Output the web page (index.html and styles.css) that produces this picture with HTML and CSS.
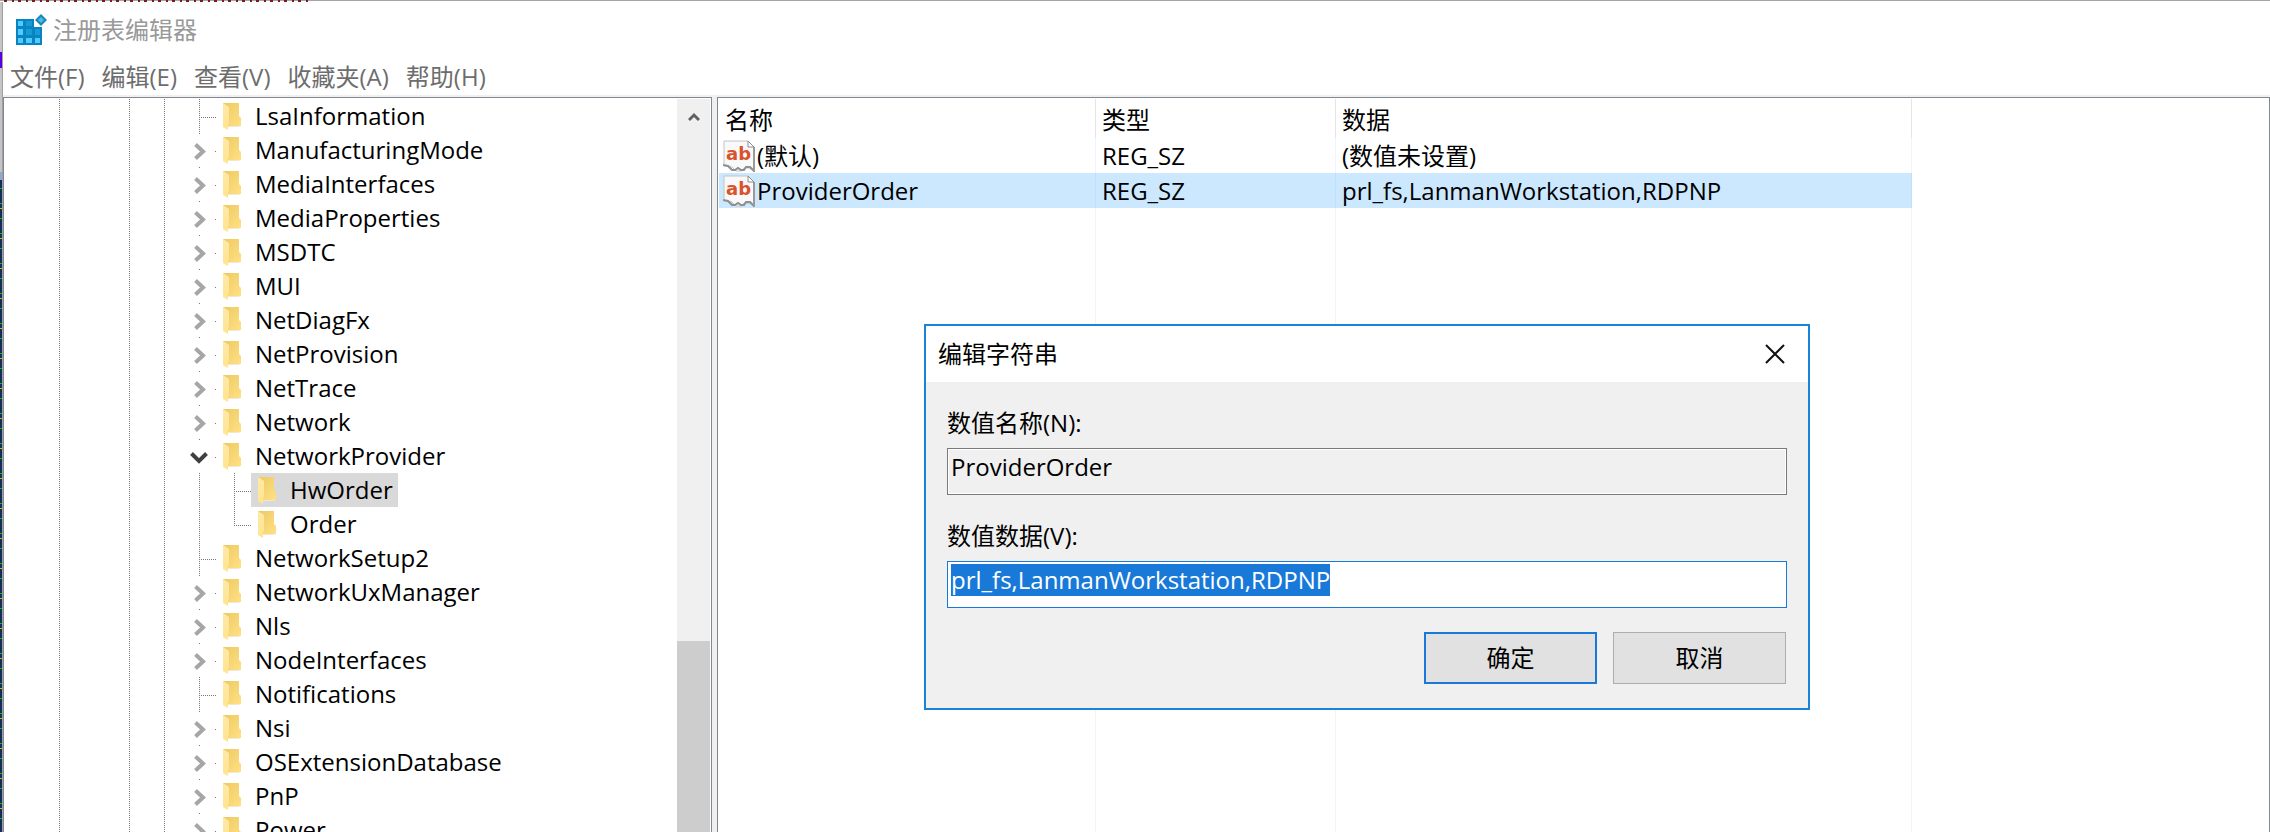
FILE: index.html
```html
<!DOCTYPE html>
<html lang="zh-CN">
<head>
  <meta charset="UTF-8">
  <meta name="viewport" content="width=device-width, initial-scale=1.0">
  <title>注册表编辑器</title>
  <link rel="stylesheet" href="styles.css">
</head>
<body>

<!-- shared icons -->
<svg class="sprite" aria-hidden="true">
  <defs>
    <linearGradient id="folderBack" x1="0" y1="0" x2="1" y2="1">
      <stop offset="0" stop-color="#edc963"/>
      <stop offset="1" stop-color="#ffe083"/>
    </linearGradient>
    <linearGradient id="folderFlap" x1="0" y1="0" x2="0" y2="1">
      <stop offset="0" stop-color="#ffe9a6"/>
      <stop offset="1" stop-color="#ffe48f"/>
    </linearGradient>
  </defs>
  <symbol id="folder" viewBox="0 0 18 28">
    <path d="M5 24h13l-3 1H5z" fill="#eee8d5"/>
    <path d="M0 1h16v13l2 2v8H0z" fill="url(#folderBack)"/>
    <path d="M0 1l6 4v16l-1 1v6l-5-3z" fill="url(#folderFlap)"/>
  </symbol>
  <symbol id="closed" viewBox="0 0 34 34">
    <path d="M13.5 11.5l7.5 7-7.5 7" fill="none" stroke="#a6a6a6" stroke-width="4"/>
    <path d="M17 0h1v1h-1zM33 18h1v1h-1zM35 18h1v1h-1z" fill="#777"/>
  </symbol>
  <symbol id="open" viewBox="0 0 34 34">
    <path d="M9.5 14.5l7.5 7.5 7.5-7.5" fill="none" stroke="#404040" stroke-width="4"/>
    <path d="M17 0h1v1h-1zM33 18h1v1h-1zM35 18h1v1h-1z" fill="#777"/>
  </symbol>
  <symbol id="leaf" viewBox="0 0 34 34">
    <path d="M17.5 0v34M19 18.5h17" fill="none" stroke="#777" stroke-dasharray="1 1"/>
  </symbol>
  <symbol id="last" viewBox="0 0 34 34">
    <path d="M17.5 0v19M19 18.5h17" fill="none" stroke="#777" stroke-dasharray="1 1"/>
  </symbol>
  <symbol id="paper" viewBox="0 0 32 32">
    <path d="M1 1h24l6 6v24l-5-3-5 0-2 3h-6l-4-4-4-1H1z" fill="#f9f9f9" stroke="#c4c4c4"/>
    <path d="M0 25l5 1 4 4h3l3-2 3 2h3l2-3h4l4 4" fill="none" stroke="#8f8f8f" stroke-width="2"/>
    <path d="M31 7v25" stroke="#9a9a9a" stroke-width="2"/>
    <path d="M25 1v6h6z" fill="#fff" stroke="#8c8c8c"/>
  </symbol>
</svg>

<div class="edge-top"></div>

<div class="screen">
  <div class="edge-left"></div>

  <div class="window">
    <header class="titlebar">
      <svg class="app-icon" viewBox="0 0 32 32" aria-hidden="true">
        <path d="M0 5h18v8h8v18H0z" fill="#0a84c1"/>
        <path d="M2 7h5v5H2zM2 15h5v6H2zM2 24h5v5H2zM10 24h6v5h-6zM19 24h5v5h-5z" fill="#4fcbff"/>
        <path d="M10 7h6v5h-6zM10 15h6v6h-6zM19 15h5v6h-5z" fill="#159bd8"/>
        <path d="M25 0l6 6-6 6-6-6z" fill="#1c87b8"/>
        <path d="M25 3l3 3-3 3-3-3z" fill="#48bdea"/>
      </svg>
      <h1>注册表编辑器</h1>
    </header>

    <nav class="menu">
      <button type="button">文件(F)</button>
      <button type="button">编辑(E)</button>
      <button type="button">查看(V)</button>
      <button type="button">收藏夹(A)</button>
      <button type="button">帮助(H)</button>
    </nav>

    <main class="panes">
      <section class="tree-pane">
        <ul class="tree" id="tree"></ul>
        <div class="scrollbar">
          <button type="button" class="scroll-up" aria-label="向上滚动">
            <svg viewBox="0 0 12 10"><path d="M1 8l5-5 5 5" fill="none" stroke="#606060" stroke-width="3"/></svg>
          </button>
          <div class="thumb"></div>
        </div>
      </section>

      <section class="list-pane">
        <table class="values">
          <colgroup>
            <col class="col-name">
            <col class="col-type">
            <col class="col-data">
          </colgroup>
          <thead>
            <tr><th>名称</th><th>类型</th><th>数据</th></tr>
          </thead>
          <tbody>
            <tr>
              <td><div class="name"><svg viewBox="0 0 32 32"><use href="#paper"/><text x="3" y="20" class="ab">ab</text></svg>(默认)</div></td>
              <td>REG_SZ</td>
              <td>(数值未设置)</td>
            </tr>
            <tr class="selected">
              <td><div class="name"><svg viewBox="0 0 32 32"><use href="#paper"/><text x="3" y="20" class="ab">ab</text></svg>ProviderOrder</div></td>
              <td>REG_SZ</td>
              <td>prl_fs,LanmanWorkstation,RDPNP</td>
            </tr>
            <tr class="rest" aria-hidden="true"><td></td><td></td><td></td></tr>
          </tbody>
        </table>
      </section>
    </main>
  </div>
</div>

<form class="dialog" role="dialog" aria-labelledby="dialogTitle">
  <div class="dialog-title">
    <h2 id="dialogTitle">编辑字符串</h2>
    <button type="button" class="close" aria-label="关闭">
      <svg viewBox="0 0 20 20"><path d="M1 1l18 18M19 1L1 19" stroke="#111" stroke-width="2"/></svg>
    </button>
  </div>
  <div class="dialog-body">
    <div class="field">
      <label for="valueName">数值名称(N):</label>
      <input type="text" id="valueName" value="ProviderOrder" readonly>
    </div>
    <div class="field">
      <label for="valueData">数值数据(V):</label>
      <input type="text" id="valueData" value="prl_fs,LanmanWorkstation,RDPNP" spellcheck="false">
    </div>
    <div class="actions">
      <button type="button" class="default">确定</button>
      <button type="button">取消</button>
    </div>
  </div>
</form>

<script>
  const keys = [
    { name: "LsaInformation", mark: "leaf" },
    { name: "ManufacturingMode", mark: "closed" },
    { name: "MediaInterfaces", mark: "closed" },
    { name: "MediaProperties", mark: "closed" },
    { name: "MSDTC", mark: "closed" },
    { name: "MUI", mark: "closed" },
    { name: "NetDiagFx", mark: "closed" },
    { name: "NetProvision", mark: "closed" },
    { name: "NetTrace", mark: "closed" },
    { name: "Network", mark: "closed" },
    { name: "NetworkProvider", mark: "open", children: [
      { name: "HwOrder", mark: "leaf", selected: true },
      { name: "Order", mark: "last" }
    ] },
    { name: "NetworkSetup2", mark: "leaf" },
    { name: "NetworkUxManager", mark: "closed" },
    { name: "Nls", mark: "closed" },
    { name: "NodeInterfaces", mark: "closed" },
    { name: "Notifications", mark: "leaf" },
    { name: "Nsi", mark: "closed" },
    { name: "OSExtensionDatabase", mark: "closed" },
    { name: "PnP", mark: "closed" },
    { name: "Power", mark: "closed" }
  ];

  function render(items) {
    return items.map(k => `
      <li>
        <div class="row">
          <svg class="mark"><use href="#${k.mark}"/></svg>
          <span class="key${k.selected ? ' selected' : ''}"><svg class="folder"><use href="#folder"/></svg>${k.name}</span>
        </div>
        ${k.children ? `<ul>${render(k.children)}</ul>` : ''}
      </li>`).join('');
  }

  document.getElementById('tree').innerHTML = render(keys);

  const data = document.getElementById('valueData');
  data.focus();
  data.select();
</script>

</body>
</html>
```
FILE: styles.css
```css
* {
  box-sizing: border-box;
  margin: 0;
  padding: 0;
}

body {
  display: flex;
  flex-direction: column;
  height: 100vh;
  overflow: hidden;
  background: #fff;
  color: #000;
  font-family: "Open Sans", "Noto Sans CJK SC", sans-serif;
  font-size: 24px;
  line-height: 34px;
}

button, input {
  font: inherit;
  color: inherit;
}

h1, h2, th {
  font-size: 24px;
  font-weight: normal;
}

.sprite {
  position: absolute;
  width: 0;
  height: 0;
}

/* slivers of the editor window behind */
.edge-top {
  flex: none;
  height: 2px;
  background:
    repeating-linear-gradient(90deg, #7a1c1c 0 3px, transparent 3px 8px, #7a1c1c 8px 10px, transparent 10px 14px) 4px 0 / 306px 2px no-repeat,
    linear-gradient(#a5a5a5, #a5a5a5) 0 0 / 100% 1px no-repeat;
}

.screen {
  display: flex;
  flex: 1;
  min-height: 0;
}

.edge-left {
  flex: none;
  width: 2px;
  background:
    linear-gradient(#5a00e0, #5a00e0) 0 50px / 2px 16px no-repeat,
    linear-gradient(#c4c4c4, #c4c4c4) 0 0 / 2px 170px no-repeat,
    linear-gradient(#8fa9cc, #8fa9cc) 0 170px / 2px 8px no-repeat,
    repeating-linear-gradient(#142c5c 0 6px, #00c800 6px 7px, #142c5c 7px 21px, #00c800 21px 22px, #142c5c 22px 26px, #c8c800 26px 27px, #142c5c 27px 30px);
}

.window {
  display: flex;
  flex: 1;
  flex-direction: column;
  min-width: 0;
  border-left: 1px solid #a0a0a0;
}

.titlebar {
  display: flex;
  align-items: center;
  gap: 5px;
  height: 56px;
  padding-left: 13px;
}

.titlebar h1 {
  color: #999;
}

.app-icon {
  width: 32px;
  height: 32px;
}

.menu {
  display: flex;
  gap: 17px;
  padding: 2px 7px 1px;
}

.menu button {
  border: 0;
  background: none;
  color: #6d6d6d;
}

.panes {
  display: flex;
  flex: 1;
  gap: 5px;
  min-height: 0;
  padding-top: 2px;
  background: #f0f0f0;
}

.tree-pane, .list-pane {
  border: 1px solid #828790;
  border-bottom: 0;
  background: #fff;
  overflow: hidden;
}

.tree-pane {
  display: flex;
  flex: 0 0 709px;
  padding: 1px 1px 0;
}

/* dotted guides of the parent levels */
.tree {
  flex: 1;
  padding-left: 177px;
  list-style: none;
  background:
    repeating-linear-gradient(#777 0 1px, transparent 1px 2px) 54px 0 / 1px 100% no-repeat,
    repeating-linear-gradient(#777 0 1px, transparent 1px 2px) 124px 0 / 1px 100% no-repeat,
    repeating-linear-gradient(#777 0 1px, transparent 1px 2px) 159px 0 / 1px 100% no-repeat;
}

.tree ul {
  padding-left: 35px;
  list-style: none;
  background: repeating-linear-gradient(#777 0 1px, transparent 1px 2px) 17px 0 / 1px 100% no-repeat;
}

.row {
  display: flex;
  height: 34px;
}

.mark {
  width: 34px;
  height: 34px;
  overflow: visible;
}

.mark use {
  overflow: visible;
}

.key {
  display: flex;
  align-items: center;
  gap: 14px;
  padding: 0 5px 0 7px;
  white-space: nowrap;
}

.key.selected {
  background: #d9d9d9;
}

.folder {
  width: 18px;
  height: 28px;
}

.scrollbar {
  display: flex;
  flex: 0 0 33px;
  flex-direction: column;
  justify-content: space-between;
  background: #f0f0f0;
}

.scroll-up {
  height: 36px;
  border: 0;
  background: none;
}

.scroll-up svg {
  display: block;
  width: 12px;
  height: 10px;
  margin: 0 auto;
}

.thumb {
  height: 26%;
  background: #cdcdcd;
}

.list-pane {
  flex: 1;
  min-width: 0;
  padding: 1px 1px 0;
}

.values {
  height: 100%;
  border-spacing: 0;
  table-layout: fixed;
  width: 1193px;
}

.col-name {
  width: 377px;
}

.col-type {
  width: 240px;
}

.values th, .values td {
  height: 35px;
  padding-left: 6px;
  border-right: 1px solid #edf4fa;
  text-align: left;
  white-space: nowrap;
}

.values th {
  height: 39px;
  padding-top: 2px;
  border-color: #e5e5e5;
}

.values td:first-child {
  padding-left: 4px;
}

.values .selected td {
  border-color: #bfe1fa;
  background: #cce8ff;
}

.values .rest td {
  height: auto;
}

.name {
  display: flex;
  align-items: center;
  gap: 2px;
}

.name svg {
  width: 32px;
  height: 32px;
}

.ab {
  fill: #d9532c;
  font: bold 18px "DejaVu Sans", sans-serif;
}

.dialog {
  position: absolute;
  top: 324px;
  left: 924px;
  width: 886px;
  border: 2px solid #1883d7;
  background: #f0f0f0;
}

.dialog-title {
  display: flex;
  align-items: center;
  justify-content: space-between;
  height: 56px;
  padding: 0 23px 0 12px;
  background: #fff;
}

.close {
  border: 0;
  background: none;
}

.close svg {
  display: block;
  width: 20px;
  height: 20px;
}

.dialog-body {
  display: flex;
  flex-direction: column;
  gap: 24px;
  padding: 24px 21px;
}

.field {
  display: flex;
  flex-direction: column;
  gap: 8px;
}

.field input {
  padding: 2px 3px 11px;
  border: 1px solid #7a7a7a;
  background: #fff;
  line-height: 32px;
  outline: none;
}

.field input[readonly] {
  background: #f0f0f0;
  box-shadow: inset 0 0 0 1px #fff;
}

.field input:focus {
  border-color: #1979d8;
}

.field input::selection {
  background: #1979d8;
  color: #fff;
}

.actions {
  display: flex;
  justify-content: flex-end;
  gap: 16px;
  padding-right: 1px;
}

.actions button {
  width: 173px;
  height: 52px;
  border: 1px solid #adadad;
  background: #e1e1e1;
}

.actions .default {
  border: 2px solid #1979d8;
}
```
